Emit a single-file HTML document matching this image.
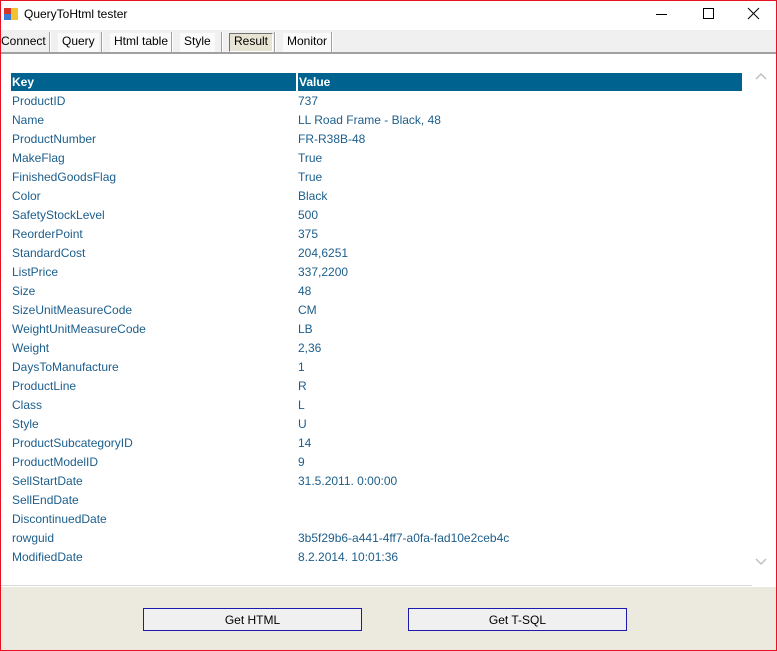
<!DOCTYPE html>
<html><head><style>
*{margin:0;padding:0;box-sizing:border-box}
body{width:777px;height:651px;overflow:hidden;font-family:"Liberation Sans",Arial,sans-serif;background:#fff;position:relative}
.frame{position:absolute;left:0;top:0;width:777px;height:651px;border:1px solid #e81123;pointer-events:none;z-index:10}
.title{position:absolute;left:0;top:0;width:777px;height:30px;background:#fff}
.title .t{position:absolute;left:24px;top:7px;font-size:12px;color:#000}
.tabs{position:absolute;left:0;top:30px;width:777px;height:24px;background:#f0f0f0;border-bottom:2px solid #a0a0a0}
.tab{position:absolute;top:3px;height:19px;font-size:12px;line-height:17px;padding:0 4px;background:#fafafa}
.sep{position:absolute;top:2px;width:2px;height:20px;background:#a0a0a0;border-right:1px solid #fff}
.content{position:absolute;left:1px;top:56px;width:769px;height:530px;background:#fff;border-bottom:1px solid #d8d8d8}
.sb{position:absolute;left:752px;top:56px;width:18px;height:530px;background:#fff}
table{position:absolute;left:11px;top:73px;border-collapse:collapse;font-size:12px;color:#1c5e8c}
th{background:#00628f;color:#fff;text-align:left;height:18px;padding:0 1px;font-weight:bold;border-right:2px solid #fff}
th:last-child{border-right:none}
td{height:19px;padding:0 1px;vertical-align:middle}
.bottom{position:absolute;left:1px;top:587px;width:775px;height:63px;background:#ece9de}
.btn{position:absolute;top:608px;width:219px;height:23px;border:1px solid #1b1bb0;background:#f0f0f0;font-size:12px;text-align:center;line-height:23px}
</style></head><body>
<div class="title">
<svg style="position:absolute;left:3px;top:6px" width="16" height="16"><rect x="1" y="2" width="7" height="6" fill="#d9342b"/><rect x="8" y="2" width="7" height="6" fill="#f2c230"/><rect x="1" y="8" width="7" height="6" fill="#3a7bd5"/><rect x="8" y="8" width="7" height="6" fill="#f2c230"/></svg>
<div class="t">QueryToHtml tester</div>
<svg style="position:absolute;left:655px;top:8px" width="14" height="14"><line x1="1" y1="6.5" x2="12" y2="6.5" stroke="#000"/></svg>
<svg style="position:absolute;left:702px;top:7px" width="14" height="14"><rect x="1.5" y="1.5" width="10" height="10" fill="none" stroke="#000"/></svg>
<svg style="position:absolute;left:747px;top:7px" width="14" height="14"><path d="M1 1L12 12M12 1L1 12" stroke="#000"/></svg>
</div>
<div class="tabs">
<div class="tab" style="left:0;padding:0 1px;background:#f0f0f0">Connect</div>
<div class="sep" style="left:49px"></div>
<div class="tab" style="left:58px">Query</div>
<div class="sep" style="left:101px"></div>
<div class="tab" style="left:110px">Html table</div>
<div class="sep" style="left:171px"></div>
<div class="tab" style="left:180px">Style</div>
<div class="sep" style="left:221px"></div>
<div class="tab" style="left:229px;background:#e8e4d4;border:1px solid #707070;border-right-color:#fff;border-bottom-color:#fff;line-height:15px">Result</div>
<div class="sep" style="left:274px"></div>
<div class="tab" style="left:283px">Monitor</div>
<div class="sep" style="left:331px"></div>
</div>
<div class="content"></div>
<div class="sb">
<svg style="position:absolute;left:3px;top:16px" width="12" height="10"><path d="M1 7L6 2L11 7" fill="none" stroke="#c0c0c0" stroke-width="1.5"/></svg>
<svg style="position:absolute;left:3px;top:500px" width="12" height="10"><path d="M1 3L6 8L11 3" fill="none" stroke="#c0c0c0" stroke-width="1.5"/></svg>
</div>
<table>
<tr><th style="width:286px">Key</th><th style="width:445px">Value</th></tr>
<tr><td>ProductID</td><td>737</td></tr>
<tr><td>Name</td><td>LL Road Frame - Black, 48</td></tr>
<tr><td>ProductNumber</td><td>FR-R38B-48</td></tr>
<tr><td>MakeFlag</td><td>True</td></tr>
<tr><td>FinishedGoodsFlag</td><td>True</td></tr>
<tr><td>Color</td><td>Black</td></tr>
<tr><td>SafetyStockLevel</td><td>500</td></tr>
<tr><td>ReorderPoint</td><td>375</td></tr>
<tr><td>StandardCost</td><td>204,6251</td></tr>
<tr><td>ListPrice</td><td>337,2200</td></tr>
<tr><td>Size</td><td>48</td></tr>
<tr><td>SizeUnitMeasureCode</td><td>CM</td></tr>
<tr><td>WeightUnitMeasureCode</td><td>LB</td></tr>
<tr><td>Weight</td><td>2,36</td></tr>
<tr><td>DaysToManufacture</td><td>1</td></tr>
<tr><td>ProductLine</td><td>R</td></tr>
<tr><td>Class</td><td>L</td></tr>
<tr><td>Style</td><td>U</td></tr>
<tr><td>ProductSubcategoryID</td><td>14</td></tr>
<tr><td>ProductModelID</td><td>9</td></tr>
<tr><td>SellStartDate</td><td>31.5.2011. 0:00:00</td></tr>
<tr><td>SellEndDate</td><td></td></tr>
<tr><td>DiscontinuedDate</td><td></td></tr>
<tr><td>rowguid</td><td>3b5f29b6-a441-4ff7-a0fa-fad10e2ceb4c</td></tr>
<tr><td>ModifiedDate</td><td>8.2.2014. 10:01:36</td></tr>
</table>
<div class="bottom"></div>
<div class="btn" style="left:143px">Get HTML</div>
<div class="btn" style="left:408px">Get T-SQL</div>
<div class="frame"></div>
</body></html>
